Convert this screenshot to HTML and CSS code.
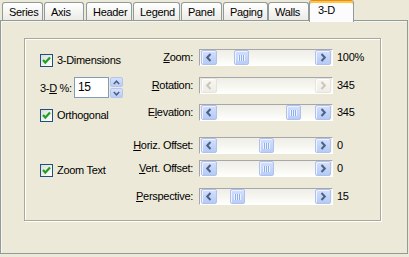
FILE: index.html
```html
<!DOCTYPE html>
<html>
<head>
<meta charset="utf-8">
<link rel="stylesheet" href="styles.css">
</head>
<body>
<div class="window">
  <div class="tabs">
    <div class="tab t-series">Series</div>
    <div class="tab t-axis">Axis</div>
    <div class="tab t-header">Header</div>
    <div class="tab t-legend">Legend</div>
    <div class="tab t-panel">Panel</div>
    <div class="tab t-paging">Paging</div>
    <div class="tab t-walls">Walls</div>
    <div class="tab t-3d active">3-D</div>
  </div>
  <div class="panel">
    <div class="group">
      <div class="grid">
        <label class="check r1 c1 off5"><span class="cb"><svg width="11" height="11" viewBox="0 0 11 11"><path d="M2 5 L4.3 7.6 L9 2.6" fill="none" stroke="#21A121" stroke-width="2.2"/></svg></span>3-Dimensions</label>
        <div class="spinrow r2 c1">
          <span class="spinlbl">3-<u>D</u> %:</span>
          <span class="edit">15</span>
          <span class="spin">
            <span class="spinbtn"><svg width="7" height="5" viewBox="0 0 7 5"><path d="M0.8 4 L3.5 1.2 L6.2 4" fill="none" stroke="#4D6185" stroke-width="1.6"/></svg></span>
            <span class="spinbtn"><svg width="7" height="5" viewBox="0 0 7 5"><path d="M0.8 1 L3.5 3.8 L6.2 1" fill="none" stroke="#4D6185" stroke-width="1.6"/></svg></span>
          </span>
        </div>
        <label class="check r3 c1 off5"><span class="cb"><svg width="11" height="11" viewBox="0 0 11 11"><path d="M2 5 L4.3 7.6 L9 2.6" fill="none" stroke="#21A121" stroke-width="2.2"/></svg></span>Orthogonal</label>
        <label class="check r5 c1 off4"><span class="cb"><svg width="11" height="11" viewBox="0 0 11 11"><path d="M2 5 L4.3 7.6 L9 2.6" fill="none" stroke="#21A121" stroke-width="2.2"/></svg></span>Zoom Text</label>

        <span class="lbl r1"><u>Z</u>oom:</span>
        <div class="scroll r1">
          <span class="sb-btn"><svg width="8" height="9" viewBox="0 0 8 9"><path d="M5.5 1 L2.2 4.5 L5.5 8" fill="none" stroke="#4D6185" stroke-width="2"/></svg></span>
          <span class="track"><span class="thumb" style="margin-left:17px"><span class="grip"></span></span></span>
          <span class="sb-btn"><svg width="8" height="9" viewBox="0 0 8 9"><path d="M2.5 1 L5.8 4.5 L2.5 8" fill="none" stroke="#4D6185" stroke-width="2"/></svg></span>
        </div>
        <span class="val r1">100%</span>

        <span class="lbl r2"><u>R</u>otation:</span>
        <div class="scroll disabled r2">
          <span class="sb-btn"><svg width="8" height="9" viewBox="0 0 8 9"><path d="M5.5 1 L2.2 4.5 L5.5 8" fill="none" stroke="#C9C7BA" stroke-width="2"/></svg></span>
          <span class="track"></span>
          <span class="sb-btn"><svg width="8" height="9" viewBox="0 0 8 9"><path d="M2.5 1 L5.8 4.5 L2.5 8" fill="none" stroke="#C9C7BA" stroke-width="2"/></svg></span>
        </div>
        <span class="val r2">345</span>

        <span class="lbl r3">E<u>l</u>evation:</span>
        <div class="scroll r3">
          <span class="sb-btn"><svg width="8" height="9" viewBox="0 0 8 9"><path d="M5.5 1 L2.2 4.5 L5.5 8" fill="none" stroke="#4D6185" stroke-width="2"/></svg></span>
          <span class="track"><span class="thumb" style="margin-left:69px"><span class="grip"></span></span></span>
          <span class="sb-btn"><svg width="8" height="9" viewBox="0 0 8 9"><path d="M2.5 1 L5.8 4.5 L2.5 8" fill="none" stroke="#4D6185" stroke-width="2"/></svg></span>
        </div>
        <span class="val r3">345</span>

        <span class="lbl r4"><u>H</u>oriz. Offset:</span>
        <div class="scroll r4">
          <span class="sb-btn"><svg width="8" height="9" viewBox="0 0 8 9"><path d="M5.5 1 L2.2 4.5 L5.5 8" fill="none" stroke="#4D6185" stroke-width="2"/></svg></span>
          <span class="track"><span class="thumb" style="margin-left:42px"><span class="grip"></span></span></span>
          <span class="sb-btn"><svg width="8" height="9" viewBox="0 0 8 9"><path d="M2.5 1 L5.8 4.5 L2.5 8" fill="none" stroke="#4D6185" stroke-width="2"/></svg></span>
        </div>
        <span class="val r4">0</span>

        <span class="lbl r5"><u>V</u>ert. Offset:</span>
        <div class="scroll r5">
          <span class="sb-btn"><svg width="8" height="9" viewBox="0 0 8 9"><path d="M5.5 1 L2.2 4.5 L5.5 8" fill="none" stroke="#4D6185" stroke-width="2"/></svg></span>
          <span class="track"><span class="thumb" style="margin-left:42px"><span class="grip"></span></span></span>
          <span class="sb-btn"><svg width="8" height="9" viewBox="0 0 8 9"><path d="M2.5 1 L5.8 4.5 L2.5 8" fill="none" stroke="#4D6185" stroke-width="2"/></svg></span>
        </div>
        <span class="val r5">0</span>

        <span class="lbl r6"><u>P</u>erspective:</span>
        <div class="scroll r6">
          <span class="sb-btn"><svg width="8" height="9" viewBox="0 0 8 9"><path d="M5.5 1 L2.2 4.5 L5.5 8" fill="none" stroke="#4D6185" stroke-width="2"/></svg></span>
          <span class="track"><span class="thumb" style="margin-left:13px"><span class="grip"></span></span></span>
          <span class="sb-btn"><svg width="8" height="9" viewBox="0 0 8 9"><path d="M2.5 1 L5.8 4.5 L2.5 8" fill="none" stroke="#4D6185" stroke-width="2"/></svg></span>
        </div>
        <span class="val r6">15</span>
      </div>
    </div>
  </div>
</div>
</body>
</html>
```

FILE: styles.css
```css
body {
  margin: 0;
  width: 409px;
  height: 257px;
  overflow: hidden;
  background: #ECE9D8;
  font-family: "Liberation Sans", Arial, sans-serif;
  font-size: 11px;
  letter-spacing: -0.3px;
  color: #000;
}

.window {
  width: 408px;
}

/* ---------- tabs ---------- */
.tabs {
  display: flex;
  align-items: flex-start;
  height: 20px;
}

.tab {
  box-sizing: border-box;
  height: 18px;
  margin-top: 2px;
  padding: 2px 0 0 6px;
  border: 1px solid #919B9C;
  border-bottom: 0;
  border-radius: 3px 3px 0 0;
  background: linear-gradient(#FFFFFF, #ECEBE5);
  line-height: 14px;
  white-space: nowrap;
}

.t-series { margin-left: 2px; width: 41px; }
.t-axis   { margin-left: 1px; width: 40px; }
.t-header { margin-left: 2px; width: 46px; }
.t-legend { margin-left: 1px; width: 47px; }
.t-panel  { margin-left: 1px; width: 41px; }
.t-paging { margin-left: 1px; width: 45px; }
.t-walls  { margin-left: 0;   width: 41px; }
.t-3d     { margin-left: 0;   width: 45px; }

.tab.active {
  position: relative;
  z-index: 1;
  height: 22px;
  margin-top: 0;
  margin-bottom: -2px;
  padding: 2px 0 0 8px;
  border-top: 1px solid #E68B2C;
  background: #FCFCFE;
  box-shadow: inset 0 2px 0 #FFC73C;
}

/* ---------- panel ---------- */
.panel {
  box-sizing: border-box;
  width: 408px;
  height: 234px;
  padding: 17px 0 0 23px;
  border: 1px solid #919B9C;
  background: #ECE9D8;
  box-shadow: inset 1px 1px 0 #F6F5EE;
}

.group {
  box-sizing: border-box;
  width: 357px;
  height: 183px;
  padding: 10px 0 0 15px;
  border: 1px solid #ACA899;
  box-shadow: inset 1px 1px 0 #FFFFFF, 1px 1px 0 #FFFFFF;
}

.grid {
  display: grid;
  grid-template-columns: 93px 66px 138px 1fr;
  grid-template-rows: 28px 27px 33px 23px 28px 17px;
  align-items: start;
}

.r1 { grid-row: 1; }
.r2 { grid-row: 2; }
.r3 { grid-row: 3; }
.r4 { grid-row: 4; }
.r5 { grid-row: 5; }
.r6 { grid-row: 6; }
.c1 { grid-column: 1; }

.off5 { margin-top: 5px; }
.off4 { margin-top: 4px; }

/* ---------- checkbox ---------- */
.check {
  display: flex;
  align-items: center;
  gap: 4px;
  height: 13px;
  line-height: 13px;
  white-space: nowrap;
}

.cb {
  box-sizing: border-box;
  width: 13px;
  height: 13px;
  display: flex;
  align-items: center;
  justify-content: center;
  border: 1px solid #1C5180;
  background: linear-gradient(135deg, #DCDCD7, #FFFFFF);
}

/* ---------- spin edit ---------- */
.spinrow {
  display: flex;
  align-items: center;
  height: 21px;
}

.spinlbl {
  width: 34px;
  white-space: nowrap;
}

.edit {
  box-sizing: border-box;
  width: 35px;
  height: 21px;
  padding-left: 3px;
  border: 1px solid #7F9DB9;
  background: #FFFFFF;
  font-size: 12px;
  line-height: 19px;
}

.spin {
  display: flex;
  flex-direction: column;
  margin-left: 1px;
  width: 13px;
  height: 21px;
  gap: 1px;
}

.spinbtn {
  box-sizing: border-box;
  flex: 1;
  display: flex;
  align-items: center;
  justify-content: center;
  border: 1px solid #B4C6EE;
  border-radius: 2px;
  background: linear-gradient(#D6E1FC, #B9CCF6);
}

/* ---------- scrollbars ---------- */
.lbl {
  grid-column: 2;
  padding-right: 6px;
  text-align: right;
  line-height: 17px;
  white-space: nowrap;
}

.val {
  grid-column: 4;
  line-height: 17px;
  white-space: nowrap;
}

.scroll {
  grid-column: 3;
  box-sizing: border-box;
  display: flex;
  width: 134px;
  height: 17px;
  padding: 0 1px;
  border: 1px solid;
  border-color: #A7A6AA #FFFFFF #FFFFFF #A7A6AA;
  background: linear-gradient(#EEEDE6, #FEFEFB);
}

.sb-btn {
  box-sizing: border-box;
  display: flex;
  align-items: center;
  justify-content: center;
  width: 16px;
  height: 15px;
  border: 1px solid #AEC2EC;
  border-radius: 2px;
  background: linear-gradient(#D3DFFD, #B5CAF6);
  box-shadow: inset 1px 1px 0 #EEF3FE;
}

.scroll.disabled .sb-btn {
  border-color: #E6E4DA;
  background: linear-gradient(#F7F6F1, #EEEDE6);
  box-shadow: inset 1px 1px 0 #FFFFFF;
}

.track {
  flex: 1;
  display: flex;
}

.thumb {
  box-sizing: border-box;
  display: flex;
  align-items: center;
  justify-content: center;
  width: 15px;
  height: 15px;
  border: 1px solid #AEC2EC;
  border-radius: 2px;
  background: linear-gradient(#D3DFFD, #B9CDF8);
  box-shadow: inset 1px 1px 0 #EEF3FE;
}

.grip {
  width: 7px;
  height: 6px;
  background: repeating-linear-gradient(to right, #EEF4FE 0 1px, #8FAEEF 1px 2px);
}
```
